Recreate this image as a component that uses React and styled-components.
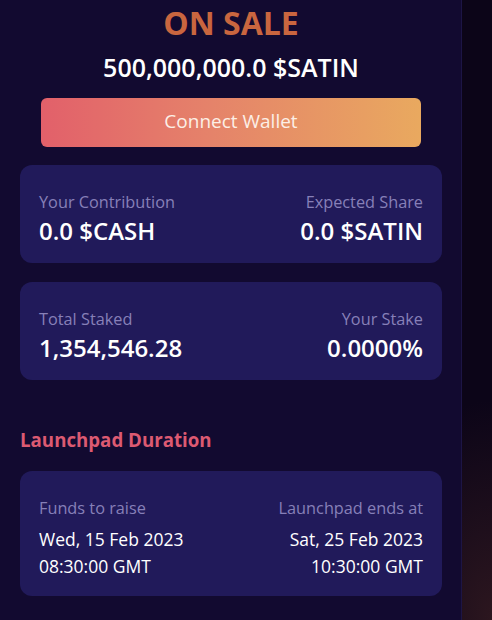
import React from 'react';
import styled, { createGlobalStyle } from 'styled-components';

const GlobalStyle = createGlobalStyle`
  html, body {
    margin: 0;
    padding: 0;
    height: 100%;
  }
  body {
    background: #0c0518;
    font-family: "Open Sans", "Noto Sans", sans-serif;
  }
`;

const Page = styled.div`
  display: flex;
  min-height: 620px;
  background:
    radial-gradient(ellipse 120px 220px at 100% 100%, rgba(70, 36, 36, 0.55), rgba(12, 5, 24, 0) 100%),
    #0c0518;
`;

const Panel = styled.div`
  box-sizing: border-box;
  width: 462px;
  padding: 3px 19px 0 20px;
  background: #120a30;
  border-right: 1px solid #1d1545;
  display: flex;
  flex-direction: column;
`;

const Title = styled.div`
  font-size: 32px;
  line-height: 40px;
  font-weight: 700;
  color: #c9663f;
  text-align: center;
`;

const Supply = styled.div`
  margin-top: 8px;
  font-size: 25px;
  line-height: 32px;
  font-weight: 600;
  color: #ffffff;
  text-align: center;
`;

const WalletButton = styled.button`
  align-self: center;
  margin-top: 15px;
  width: 380px;
  height: 49px;
  padding: 0 0 3px;
  border: none;
  border-radius: 6px;
  background: linear-gradient(90deg, #e2606a 0%, #e5836a 45%, #e9a95f 100%);
  color: #fcefe6;
  font-family: "Open Sans", sans-serif;
  font-size: 19px;
  display: flex;
  align-items: center;
  justify-content: center;
  cursor: pointer;
`;

const Card = styled.div`
  margin-top: ${p => p.$gap}px;
  background: #211a5a;
  border-radius: 12px;
  padding: 27px 19px ${p => p.$bottom}px;
  display: flex;
  justify-content: space-between;
`;

const Col = styled.div`
  display: flex;
  flex-direction: column;
  align-items: ${p => (p.$right ? 'flex-end' : 'flex-start')};
  text-align: ${p => (p.$right ? 'right' : 'left')};
`;

const Label = styled.div`
  font-size: 16.3px;
  line-height: 20px;
  color: #8780b8;
`;

const Value = styled.div`
  margin-top: 4px;
  font-size: 24px;
  line-height: 30px;
  font-weight: 600;
  color: #ffffff;
`;

const DateBlock = styled.div`
  margin-top: 8px;
  display: flex;
  flex-direction: column;
  align-items: inherit;
`;

const DateLine = styled.div`
  font-size: 17.5px;
  line-height: 27px;
  font-weight: 500;
  color: #ffffff;
`;

const SectionHeading = styled.div`
  margin-top: 48px;
  font-size: 18.7px;
  line-height: 24px;
  font-weight: 700;
  color: #dc5a72;
`;

const StatCard = ({ gap, left, right }) => (
  <Card $gap={gap} $bottom={17}>
    <Col>
      <Label>{left[0]}</Label>
      <Value>{left[1]}</Value>
    </Col>
    <Col $right>
      <Label>{right[0]}</Label>
      <Value>{right[1]}</Value>
    </Col>
  </Card>
);

const DateCol = ({ right, label, day, time }) => (
  <Col $right={right}>
    <Label>{label}</Label>
    <DateBlock>
      <DateLine>{day}</DateLine>
      <DateLine>{time}</DateLine>
    </DateBlock>
  </Col>
);

export default function App() {
  return (
    <>
      <GlobalStyle />
      <Page>
        <Panel>
          <Title>ON SALE</Title>
          <Supply>500,000,000.0 $SATIN</Supply>
          <WalletButton>Connect Wallet</WalletButton>

          <StatCard
            gap={18}
            left={['Your Contribution', '0.0 $CASH']}
            right={['Expected Share', '0.0 $SATIN']}
          />
          <StatCard
            gap={19}
            left={['Total Staked', '1,354,546.28']}
            right={['Your Stake', '0.0000%']}
          />

          <SectionHeading>Launchpad Duration</SectionHeading>

          <Card $gap={19} $bottom={16}>
            <DateCol label="Funds to raise" day="Wed, 15 Feb 2023" time="08:30:00 GMT" />
            <DateCol right label="Launchpad ends at" day="Sat, 25 Feb 2023" time="10:30:00 GMT" />
          </Card>
        </Panel>
      </Page>
    </>
  );
}
